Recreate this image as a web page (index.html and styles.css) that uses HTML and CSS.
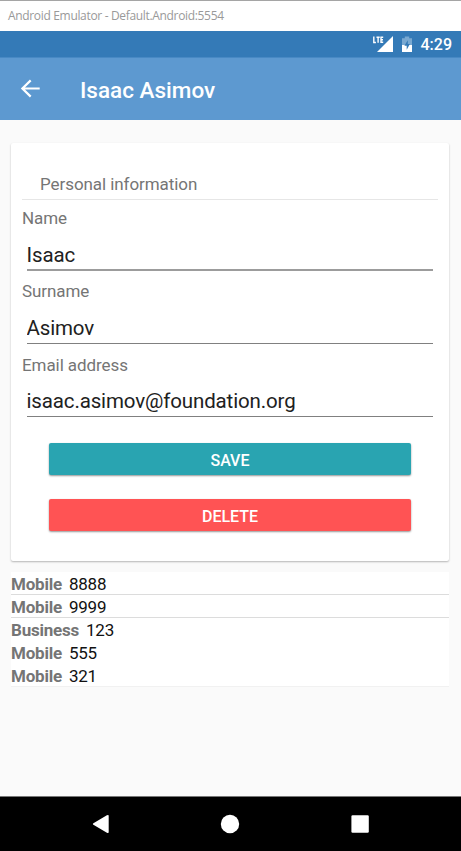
FILE: index.html
```html
<!DOCTYPE html>
<html lang="en">
<head>
<meta charset="utf-8">
<title>Isaac Asimov</title>
<link rel="stylesheet" href="styles.css">
</head>
<body>
<div class="window-title"><span>Android Emulator - Default.Android:5554</span></div>
<div class="status-bar">
  <svg class="signal" width="21" height="18" viewBox="0 0 21 18"><path d="M20 1v16H4z" fill="#fff"/><path d="M.8 1.5v6h2.1M3.5 2.2h3.2M5.1 2.2v5.6M10.2 2.2H8v5.1h2.2M8 4.7h2" fill="none" stroke="#fff" stroke-width="1.4"/></svg>
  <svg class="battery" width="12" height="17" viewBox="0 0 12 17"><path d="M1 2.3h2.8V.6h4.4v1.7H11V9H1z" fill="#78a8d1"/><path d="M1 9h10v7H1z" fill="#fff"/><path d="M6.8 4.2 3.4 9.7h2.3v4l3.2-5.6H6.8z" fill="#347ab7"/></svg>
  <span class="clock">4:29</span>
</div>
<header class="toolbar">
  <svg class="back" width="20" height="20" viewBox="0 0 20 20"><path d="M19.7 9.5H2.5M10.7 1.4 2.4 9.5l8.3 8.1" fill="none" stroke="#fff" stroke-width="2.2"/></svg>
  <h1>Isaac Asimov</h1>
</header>
<main>
  <form class="card">
    <h2>Personal information</h2>
    <label for="name">Name</label>
    <input id="name" value="Isaac">
    <label for="surname">Surname</label>
    <input id="surname" value="Asimov">
    <label for="email">Email address</label>
    <input id="email" value="isaac.asimov@foundation.org">
    <button type="button" class="save">SAVE</button>
    <button type="button" class="delete">DELETE</button>
  </form>
  <ul class="phones">
    <li class="ruled"><b>Mobile</b><span>8888</span></li>
    <li class="ruled"><b>Mobile</b><span>9999</span></li>
    <li><b>Business</b><span>123</span></li>
    <li><b>Mobile</b><span>555</span></li>
    <li><b>Mobile</b><span>321</span></li>
  </ul>
</main>
<nav class="nav-bar">
  <svg width="20" height="20" viewBox="0 0 20 20"><path d="M3.4 9.2 16.9 1.2q1.8-.8 1.8.6v16.4q0 1.2-1.8.6L3.4 10.8q-1.2-.8 0-1.6z" fill="#fff"/></svg>
  <svg width="20" height="20" viewBox="0 0 20 20"><circle cx="10" cy="10" r="9.2" fill="#fff"/></svg>
  <svg width="20" height="20" viewBox="0 0 20 20"><rect x="1.4" y="1.3" width="17.4" height="17.4" rx="1.2" fill="#fff"/></svg>
</nav>
</body>
</html>
```
FILE: styles.css
```css
* { box-sizing: border-box; }
body {
  margin: 0;
  height: 851px;
  display: flex;
  flex-direction: column;
  overflow: hidden;
  background: #fafafa;
  color: #757575;
  font-family: Roboto, sans-serif;
}
.window-title {
  height: 31px;
  flex: none;
  padding: 0 8px;
  border-top: 1px solid #a5a5a5;
  background: #fff;
  color: #999;
  font: 12px/29px "Open Sans", sans-serif;
  letter-spacing: -0.33px;
}
.status-bar {
  height: 26px;
  flex: none;
  display: flex;
  justify-content: flex-end;
  align-items: center;
  padding-right: 9px;
  background: #347ab7;
  color: #fff;
}
.battery { margin: 0 8px 0 7px; }
.clock { padding-top: 2px; font-size: 16px; font-weight: 500; line-height: 24px; }
.toolbar {
  height: 63px;
  flex: none;
  display: flex;
  align-items: center;
  padding-left: 20px;
  border-top: 1px solid #4889c4;
  background: #5d99d0;
  color: #fff;
}
.toolbar h1 {
  margin: 1px 0 0 40px;
  font-size: 22.5px;
  font-weight: 500;
}
main { flex: 1; padding: 23px 12px 0 11px; }
.card {
  height: 418px;
  display: flex;
  flex-direction: column;
  padding: 26px 11px 0;
  border-radius: 2px;
  background: #fff;
  box-shadow: 0 1px 2px rgba(0, 0, 0, .28);
}
.card h2 {
  height: 31px;
  margin: 0 0 3px;
  padding-left: 18px;
  border-bottom: 1px solid #e6e6e6;
  font-size: 17px;
  line-height: 31px;
  font-weight: 400;
  letter-spacing: -0.07px;
}
.card label { height: 31px; font-size: 17px; line-height: 31px; letter-spacing: -0.08px; }
.card input {
  height: 36.5px;
  margin: 0 5px 6px 4.5px;
  padding: 6px 0 0;
  border: 0;
  border-bottom: 1px solid #808080;
  border-radius: 0;
  background: transparent;
  color: #212121;
  font: 20.5px/28px Roboto, sans-serif;
  letter-spacing: -0.14px;
}
.card #name { height: 37px; margin-bottom: 5px; border-bottom: 2px solid #9c9c9c; }
.card #email { height: 36px; }
.card button {
  height: 32px;
  margin: 0 27px;
  padding: 3px 0 0;
  border: 0;
  border-radius: 2px;
  color: #fff;
  font: 500 16px/29px Roboto, sans-serif;
  letter-spacing: -0.05px;
  box-shadow: 0 1px 2px rgba(0, 0, 0, .42);
}
.card .save { margin-top: 20.5px; background: #29a4b1; }
.card .delete { margin-top: 24px; background: #ff5354; }
.phones {
  height: 115px;
  margin: 11px 0 0;
  padding: 0;
  list-style: none;
  background: #fff;
  border-bottom: 1px solid #f1f1f1;
}
.phones li {
  display: flex;
  gap: 7px;
  height: 23px;
  font-size: 17px;
  line-height: 24px;
  letter-spacing: -0.22px;
}
.phones .ruled { border-bottom: 1px solid #dcdcdc; }
.phones b { font-weight: 700; }
.phones span { color: #111; }
.nav-bar {
  height: 55px;
  flex: none;
  display: flex;
  justify-content: center;
  align-items: center;
  gap: 110px;
  padding-right: 1px;
  border-top: 1px solid #777;
  background: #000;
}
```
